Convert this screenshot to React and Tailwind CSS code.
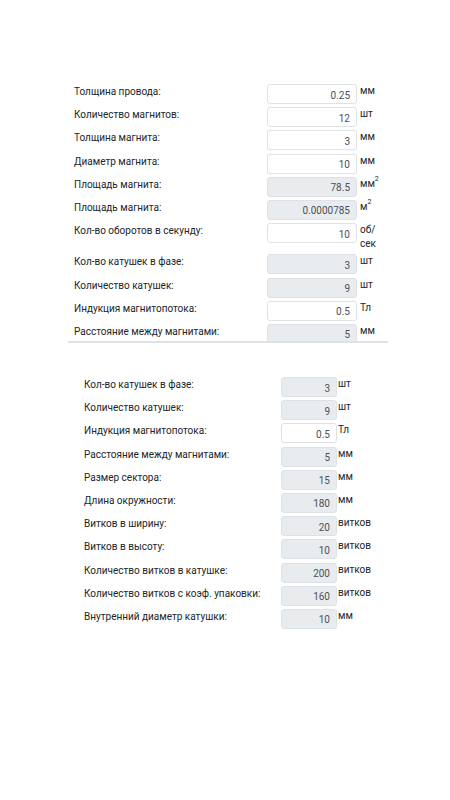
import React from "react";

const sq = (u) => (
  <span className="inline-flex items-start">
    {u}
    <span className="text-[7px] leading-[8px] -mt-[2px]">2</span>
  </span>
);

const topRows = [
  ["Толщина провода:", "0.25", "мм", false],
  ["Количество магнитов:", "12", "шт", false],
  ["Толщина магнита:", "3", "мм", false],
  ["Диаметр магнита:", "10", "мм", false],
  ["Площадь магнита:", "78.5", sq("мм"), true],
  ["Площадь магнита:", "0.0000785", sq("м"), true],
  ["Кол-во оборотов в секунду:", "10", "об/сек", false],
  ["Кол-во катушек в фазе:", "3", "шт", true],
  ["Количество катушек:", "9", "шт", true],
  ["Индукция магнитопотока:", "0.5", "Тл", false],
  ["Расстояние между магнитами:", "5", "мм", true],
];

const bottomRows = [
  ["Кол-во катушек в фазе:", "3", "шт", true],
  ["Количество катушек:", "9", "шт", true],
  ["Индукция магнитопотока:", "0.5", "Тл", false],
  ["Расстояние между магнитами:", "5", "мм", true],
  ["Размер сектора:", "15", "мм", true],
  ["Длина окружности:", "180", "мм", true],
  ["Витков в ширину:", "20", "витков", true],
  ["Витков в высоту:", "10", "витков", true],
  ["Количество витков в катушке:", "200", "витков", true],
  ["Количество витков с коэф. упаковки:", "160", "витков", true],
  ["Внутренний диаметр катушки:", "10", "мм", true],
];

function Row({ label, value, unit, disabled, labelW, inputW, unitCls }) {
  return (
    <div className="flex items-start mb-[3.2px]">
      <div className={`${labelW} shrink-0 pt-[1px] leading-[14px] text-[#212529]`}>{label}</div>
      <input
        readOnly
        value={value}
        className={`${inputW} h-[20px] shrink-0 rounded-[3px] border border-[#dee2e6] px-[6px] pt-[2px] text-right text-[10px] text-[#495057] outline-none ${
          disabled ? "bg-[#e9ecef]" : "bg-white"
        }`}
      />
      <div className={`${unitCls} leading-[14px] text-[#212529]`}>{unit}</div>
    </div>
  );
}

export default function App() {
  return (
    <div className="w-[450px] min-h-[800px] bg-white pt-[80px] text-[10px] font-[Roboto,'Noto_Sans',sans-serif]">
      <div className="ml-[68px] w-[320px] h-[263px] overflow-hidden border-b-2 border-[#dee2e6] pt-[4px] pl-[6px]">
        {topRows.map(([l, v, u, d], i) => (
          <Row
            key={i}
            label={l}
            value={v}
            unit={u}
            disabled={d}
            labelW="w-[193px]"
            inputW="w-[90px]"
            unitCls="ml-[3px] w-[22px]"
          />
        ))}
      </div>
      <div className="pl-[84px] pt-[34px]">
        {bottomRows.map(([l, v, u, d], i) => (
          <Row
            key={i}
            label={l}
            value={v}
            unit={u}
            disabled={d}
            labelW="w-[197px]"
            inputW="w-[56px]"
            unitCls="ml-[1px]"
          />
        ))}
      </div>
    </div>
  );
}
